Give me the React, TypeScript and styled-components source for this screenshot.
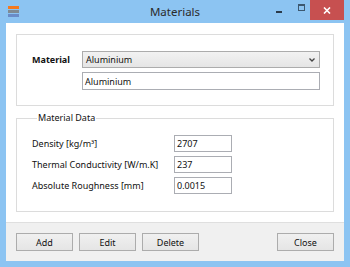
import React from 'react';
import styled, { createGlobalStyle } from 'styled-components';

const GlobalStyle = createGlobalStyle`
  html, body { margin: 0; padding: 0; }
  body { font-family: "Noto Sans", "Open Sans", sans-serif; color: #111; }
  * { box-sizing: border-box; }
`;

const Window = styled.div`
  width: 350px; height: 267px;
  background: #8cc4f2;
  display: flex; flex-direction: column;
  padding: 0 6px 6px;
`;

const TitleBar = styled.div`
  height: 23px; flex-shrink: 0;
  display: grid; grid-template-columns: 1fr auto 1fr; align-items: start;
`;

const AppIcon = styled.div`
  margin: 6px 0 0 2px; width: 11px;
  display: flex; flex-direction: column; gap: 1px;
`;
const IconBar = styled.span<{ $c: string }>` display: block; height: 3px; background: ${({ $c }) => $c}; `;

const Title = styled.div`
  font-size: 11.5px; color: #2b2b2b; padding-top: 4px; line-height: 16px;
`;

const Controls = styled.div` justify-self: end; display: flex; `;
const CtrlBox = styled.div<{ $w: number }>`
  width: ${({ $w }) => $w}px; height: 20px;
  display: flex; justify-content: center; align-items: flex-start;
`;
const MinGlyph = styled.span` margin-top: 11px; width: 6px; height: 2px; background: #2b3a4a; `;
const MaxGlyph = styled.span` margin-top: 4px; width: 7px; height: 7px; border: 1px solid #3c5870; border-top-width: 2px; `;
const CloseBox = styled.div`
  width: 34px; height: 20px; background: #c75050;
  display: flex; align-items: center; justify-content: center;
`;

const Client = styled.div` flex: 1; display: flex; flex-direction: column; background: #fff; `;

const Content = styled.div`
  flex: 1; padding: 11px 10px 10px;
  display: flex; flex-direction: column; gap: 6px;
`;

const MaterialBox = styled.div`
  border: 1px solid #dcdcdc; padding: 16px 13px 15px 15px;
  display: grid; grid-template-columns: 50px 1fr; row-gap: 4px; align-items: center;
`;

const BoldLabel = styled.span` font-size: 9px; font-weight: bold; color: #111; `;

const Select = styled.div`
  height: 17px; border: 1px solid #acacac;
  background: linear-gradient(#f2f2f2, #e5e5e5);
  display: flex; align-items: center; justify-content: space-between;
  padding: 0 4px 0 3px; font-size: 9px;
`;

const Field = styled.div<{ $w?: number }>`
  height: 18px; border: 1px solid #abadb3; background: #fff;
  display: flex; align-items: center; padding: 0 2px; font-size: 9px;
  ${({ $w }) => ($w ? `width: ${$w}px; height: 17px;` : '')}
`;

const Group = styled.fieldset`
  margin: 0; border: 1px solid #dcdcdc; padding: 11px 0 17px 15px;
  display: grid; grid-template-columns: 142px 58px; row-gap: 4px; align-items: center;
`;
const Legend = styled.legend` font-size: 9px; padding: 0 1px; margin-left: 5px; line-height: 12px; `;
const Label = styled.span` font-size: 9px; `;

const Footer = styled.div`
  flex-shrink: 0; background: #f0f0f0; border-top: 1px solid #dfdfdf;
  padding: 10px 10px 10px; display: flex; gap: 6px;
`;
const Button = styled.div<{ $push?: boolean }>`
  width: 57px; height: 18px; border: 1px solid #acacac;
  background: linear-gradient(#f0f0f0, #e5e5e5);
  display: flex; align-items: center; justify-content: center; font-size: 9px;
  ${({ $push }) => ($push ? 'margin-left: auto;' : '')}
`;

export default function App() {
  return (
    <>
      <GlobalStyle />
      <Window>
        <TitleBar>
          <AppIcon>
            <IconBar $c="#f47a20" />
            <IconBar $c="#7f8a92" />
            <IconBar $c="#6a8cc7" />
          </AppIcon>
          <Title>Materials</Title>
          <Controls>
            <CtrlBox $w={26}><MinGlyph /></CtrlBox>
            <CtrlBox $w={18}><MaxGlyph /></CtrlBox>
            <CloseBox>
              <svg width="8" height="7" viewBox="0 0 8 7">
                <path d="M1 0.5 L7 6.5 M7 0.5 L1 6.5" stroke="#fff" strokeWidth="1.6" />
              </svg>
            </CloseBox>
          </Controls>
        </TitleBar>
        <Client>
          <Content>
            <MaterialBox>
              <BoldLabel>Material</BoldLabel>
              <Select>
                <span>Aluminium</span>
                <svg width="6" height="4" viewBox="0 0 6 4">
                  <path d="M0.5 0.5 L3 3 L5.5 0.5" stroke="#444" strokeWidth="1.3" fill="none" />
                </svg>
              </Select>
              <span />
              <Field>Aluminium</Field>
            </MaterialBox>
            <Group>
              <Legend>Material Data</Legend>
              <Label>Density [kg/m³]</Label>
              <Field $w={58}>2707</Field>
              <Label>Thermal Conductivity [W/m.K]</Label>
              <Field $w={58}>237</Field>
              <Label>Absolute Roughness [mm]</Label>
              <Field $w={58}>0.0015</Field>
            </Group>
          </Content>
          <Footer>
            <Button>Add</Button>
            <Button>Edit</Button>
            <Button>Delete</Button>
            <Button $push>Close</Button>
          </Footer>
        </Client>
      </Window>
    </>
  );
}
